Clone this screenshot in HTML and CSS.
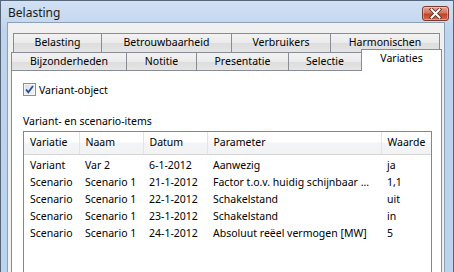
FILE: index.html
```html
<!DOCTYPE html>
<html lang="nl">
<head>
    <meta charset="UTF-8">
    <title>Belasting</title>
    <link rel="stylesheet" href="styles.css">
</head>
<body>
<div class="window">
    <div class="titlebar">
        <span class="title">Belasting</span>
        <span class="close">
            <svg width="17" height="11" viewBox="0 0 17 11">
                <path d="M4.5 1.5 L12.5 9.5 M12.5 1.5 L4.5 9.5" stroke="#5a2a20" stroke-width="3.6" stroke-linecap="square"/>
                <path d="M4.5 1.5 L12.5 9.5 M12.5 1.5 L4.5 9.5" stroke="#fff" stroke-width="2" stroke-linecap="square"/>
            </svg>
        </span>
    </div>
    <div class="client">
        <div class="tabrow back">
            <div class="tab" style="width:89px">Belasting</div>
            <div class="tab" style="width:131px">Betrouwbaarheid</div>
            <div class="tab" style="width:100px">Verbruikers</div>
            <div class="tab" style="width:110px">Harmonischen</div>
        </div>
        <div class="tabrow front">
            <div class="tab" style="width:116px">Bijzonderheden</div>
            <div class="tab" style="width:71px">Notitie</div>
            <div class="tab" style="width:93px">Presentatie</div>
            <div class="tab" style="width:74px">Selectie</div>
            <div class="tab current" style="width:81px">Variaties</div>
        </div>
        <div class="panel">
            <label class="check">
                <span class="box">
                    <svg width="11" height="11" viewBox="0 0 11 11">
                        <path d="M2 5.5 L4.3 8.2 L9 2" fill="none" stroke="#2b4d9a" stroke-width="1.8"/>
                    </svg>
                </span>
                Variant-object
            </label>
            <div class="caption">Variant- en scenario-items</div>
            <div class="list">
                <table>
                    <colgroup>
                        <col style="width:55px">
                        <col style="width:64px">
                        <col style="width:64px">
                        <col style="width:174px">
                        <col style="width:50px">
                    </colgroup>
                    <thead>
                        <tr><th>Variatie</th><th>Naam</th><th>Datum</th><th>Parameter</th><th>Waarde</th></tr>
                    </thead>
                    <tbody>
                        <tr class="first"><td>Variant</td><td>Var 2</td><td>6-1-2012</td><td>Aanwezig</td><td>ja</td></tr>
                        <tr><td>Scenario</td><td>Scenario 1</td><td>21-1-2012</td><td>Factor t.o.v. huidig schijnbaar ...</td><td>1,1</td></tr>
                        <tr><td>Scenario</td><td>Scenario 1</td><td>22-1-2012</td><td>Schakelstand</td><td>uit</td></tr>
                        <tr><td>Scenario</td><td>Scenario 1</td><td>23-1-2012</td><td>Schakelstand</td><td>in</td></tr>
                        <tr><td>Scenario</td><td>Scenario 1</td><td>24-1-2012</td><td>Absoluut reëel vermogen [MW]</td><td>5</td></tr>
                    </tbody>
                </table>
            </div>
        </div>
    </div>
</div>
</body>
</html>
```
FILE: styles.css
```css
* {
    margin: 0;
    padding: 0;
    box-sizing: border-box;
}
html, body {
    width: 454px;
    height: 272px;
    overflow: hidden;
}
body {
    font-family: "Noto Sans", "Liberation Sans", sans-serif;
    font-size: 10.5px;
    color: #000;
}
.window {
    width: 454px;
    height: 272px;
    overflow: hidden;
    border: 1px solid #55657a;
    border-bottom: none;
    background: linear-gradient(#d2e1f3, #bed4ed 30px, #bcd3ec);
    display: flex;
    flex-direction: column;
}
.titlebar {
    height: 21px;
    flex: none;
    display: flex;
    align-items: center;
    justify-content: space-between;
    padding: 0 4px 0 7px;
}
.title {
    font-size: 12px;
    color: #1a1a1a;
    margin-top: 1px;
}
.close {
    width: 27px;
    height: 15px;
    margin-top: 3px;
    border: 1px solid #7d3a2e;
    border-radius: 3px;
    background: linear-gradient(#e7a592, #d47560 45%, #c1432c 55%, #cf6a4f);
    display: flex;
    align-items: center;
    justify-content: center;
    box-shadow: inset 0 0 0 1px rgba(255,255,255,0.35);
}
.close svg {
    display: block;
}
.client {
    flex: 1;
    min-height: 0;
    margin: 0 8px 0 6px;
    border: 1px solid #8ca0b8;
    border-bottom: none;
    background: #f0f0f0;
    padding-top: 10px;
    display: flex;
    flex-direction: column;
}
.tabrow {
    display: flex;
    flex: none;
}
.tabrow.back {
    margin-left: 5px;
}
.tabrow.front {
    margin-left: 3px;
}
.tab {
    height: 19px;
    border: 1px solid #898c95;
    border-bottom: none;
    margin-left: -1px;
    background: linear-gradient(#f2f2f2, #ebebeb 50%, #dddddd 52%, #e5e5e5);
    text-align: center;
    line-height: 17px;
    white-space: nowrap;
}
.tab:first-child {
    margin-left: 0;
}
.front .tab {
    height: 18px;
    line-height: 16px;
}
.front .tab.current {
    position: relative;
    z-index: 1;
    height: 22px;
    margin-top: -3px;
    margin-bottom: -1px;
    background: #fff;
    line-height: 16px;
}
.panel {
    flex: 1;
    min-height: 0;
    margin-left: 3px;
    width: 431px;
    border: 1px solid #898c95;
    border-bottom: none;
    background: #fff;
    padding: 12px 0 0 11px;
    display: flex;
    flex-direction: column;
}
.check {
    display: flex;
    align-items: center;
    gap: 3px;
    height: 13px;
    flex: none;
}
.box {
    width: 13px;
    height: 13px;
    border: 1px solid #8e8f8f;
    background: linear-gradient(135deg, #d8dce2, #f6f7f8);
    box-shadow: inset 0 0 0 1px #f4f4f4;
    display: flex;
    align-items: center;
    justify-content: center;
}
.box svg {
    display: block;
}
.caption {
    margin-top: 19px;
    height: 13px;
    line-height: 13px;
    flex: none;
}
.list {
    flex: 1;
    min-height: 0;
    overflow: hidden;
    margin-top: 3px;
    width: 409px;
    border: 1px solid #828790;
    border-bottom: none;
}
table {
    width: 407px;
    table-layout: fixed;
    border-collapse: collapse;
}
th {
    height: 22px;
    text-align: left;
    font-weight: normal;
    padding: 0 0 1px 6px;
    background: linear-gradient(#ffffff, #ffffff 45%, #f3f4f6 50%, #f1f2f4);
    border-right: 1px solid #e3e4e7;
    border-bottom: 1px solid #d5d5d5;
    white-space: nowrap;
}
th:last-child {
    border-right: none;
}
td {
    height: 17px;
    padding: 0 0 0 6px;
    white-space: nowrap;
    overflow: hidden;
}
tr.first td {
    height: 19px;
    padding-top: 2px;
}
```
